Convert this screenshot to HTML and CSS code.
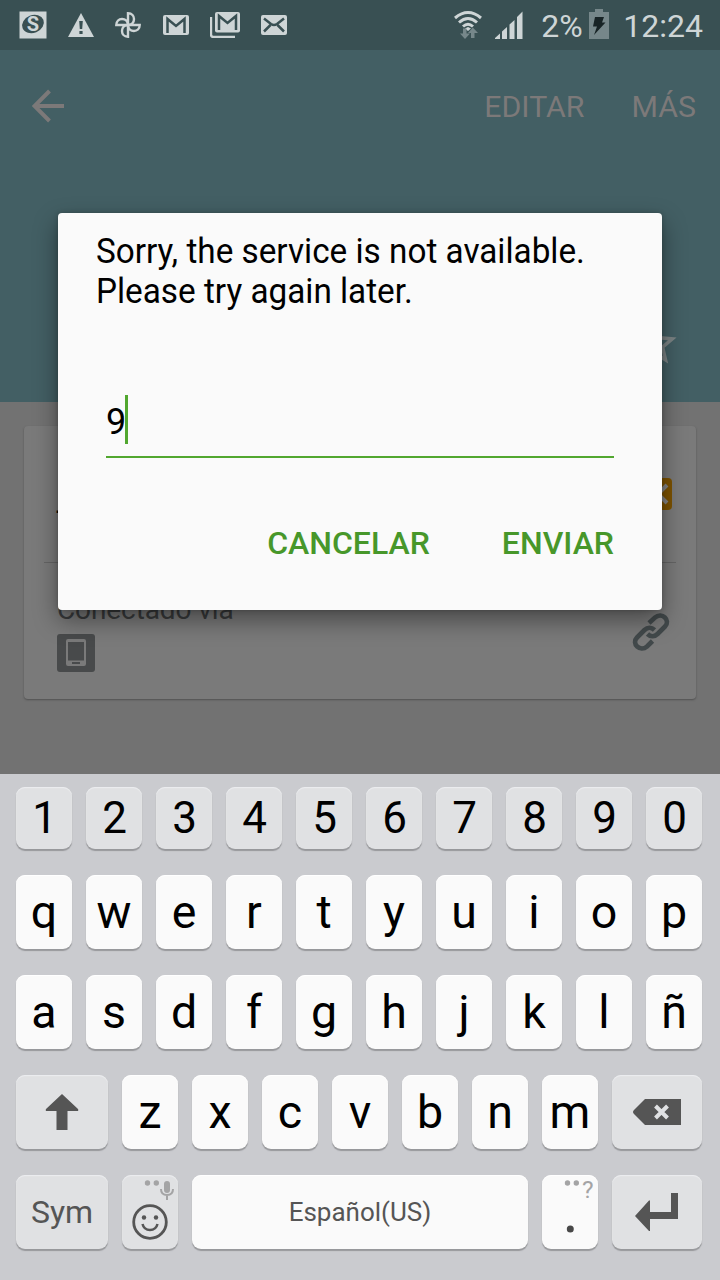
FILE: index.html
```html
<!DOCTYPE html>
<html lang="es">
<head>
<meta charset="utf-8">
<title>Contacto</title>
<link rel="stylesheet" href="styles.css">
</head>
<body>
<div class="screen">
  <header class="status">
    <div class="notifications">
      <svg width="28" height="28" viewBox="0 0 28 28"><path class="lit" d="M0.500.500h27v27h-27z"/><ellipse class="hole" cx="14" cy="13" rx="11.200" ry="8.800" transform="rotate(-22 14 13)"/><text class="badge-letter" x="14" y="20" text-anchor="middle">S</text></svg>
      <svg width="26" height="24" viewBox="0 0 26 24"><path class="lit" d="M13 0 26 24H0z"/><path class="hole" d="M11.200 8h3.600l-.6 8h-2.400zM11.400 18h3.200v3h-3.200z"/></svg>
      <svg width="26" height="26" viewBox="0 0 26 26"><g class="outline"><path d="M13 13V1.300c4 0 6 2.700 6 5.700s-2 6-6 6z"/><path d="M13 13h11.700c0 4-2.700 6-5.700 6s-6-2-6-6z"/><path d="M13 13v11.700c-4 0-6-2.700-6-5.700s2-6 6-6z"/><path d="M13 13H1.300c0-4 2.700-6 5.700-6s6 2 6 6z"/></g></svg>
      <svg width="26" height="20" viewBox="0 0 26 20"><rect class="lit" width="26" height="20" rx="2"/><path class="cut" d="M4.500 18V4L13 11l8.500-7v14"/></svg>
      <svg width="30" height="26" viewBox="0 0 30 26"><path class="outline" d="M1 5v17.500q0 2.500 2.500 2.500H25"/><rect class="lit" x="5" width="25" height="20.500" rx="2"/><path class="cut" d="M9 18V4l8.500 7L26 4v14"/></svg>
      <svg width="26" height="20" viewBox="0 0 26 20"><rect class="lit" width="26" height="20" rx="2"/><path class="cut" d="m3 3.500 7 5.500q3 2 6 0l7-5.500M3 16.500 9.500 10M23 16.500 16.500 10"/></svg>
    </div>
    <div class="system">
      <svg class="wifi" width="28" height="30" viewBox="0 0 28 30"><g class="waves"><path d="M1 8q13-11 26 0"/><path d="M5 12.500q9-8 18 0"/><path d="M9 16.500q5-4.500 10 0"/></g><path class="lit" d="m11 18.500 3-1.500 3 1.500-3 2.500z"/><path class="dim" d="M9 18.500h3.500v5H16L11 29l-5-5.500h3zM17 28h3.500v-5H24l-5.200-5.500L14 23h3z"/></svg>
      <svg class="signal" width="28" height="28" viewBox="0 0 28 28"><path class="lit" d="M0 28v-1l5-4.500V28zM7 28v-7.500l5-4.500v12zM14.500 28V13.500l5-4.500v19zM22 28V6l5.500-5.500V28z"/></svg>
      <span class="percent">2%</span>
      <svg class="battery" width="20" height="30" viewBox="0 0 20 30"><path class="dim" d="M0 3h6V0h8v3h6v27H0z"/><path class="bolt" d="M6 8h9l-2 5.500h3.500L5 26l3-8.500H4z"/></svg>
      <span class="clock">12:24</span>
    </div>
  </header>

  <section class="hero">
    <nav class="toolbar">
      <svg width="34" height="34" viewBox="0 0 34 34"><path class="back" d="M32 17H2.500M17.500 2 2.500 17l15 15"/></svg>
      <div class="actions"><span>EDITAR</span><span>MÁS</span></div>
    </nav>
    <svg class="star" width="53" height="53" viewBox="0 0 24 24"><path d="m22 9.240-7.190-.62L12 2 9.190 8.630 2 9.240l5.460 4.730L5.820 21 12 17.270 18.180 21l-1.630-7.030zM12 15.400l-3.760 2.270 1-4.280-3.320-2.880 4.380-.38L12 6.100l1.710 4.040 4.380.38-3.320 2.880 1 4.280z"/></svg>
  </section>

  <main class="content">
    <article class="card">
      <div class="phone-row">
        <span class="number">-</span>
        <svg width="32" height="32" viewBox="0 0 32 32"><rect class="orange" width="32" height="32" rx="4"/><path class="cross" d="m5 7 7 9-7 9M27 7 18 16l9 9"/></svg>
      </div>
      <div class="linked-row">
        <div class="linked">
          <span class="linked-label">Conectado vía</span>
          <svg width="38" height="38" viewBox="0 0 38 38"><rect class="tile" width="38" height="38" rx="3"/><path class="device" fill-rule="evenodd" d="M11 5h16q2 0 2 2v23q0 2-2 2H11q-2 0-2-2V7q0-2 2-2zm0 3v18.500h16V8zm4 20v2h8v-2z"/></svg>
        </div>
        <svg class="chain" width="38" height="38" viewBox="0 0 38 38"><path d="m17 10 6-5.500c7-6 16 3 10 9L25.500 21c-3 3-7 3-10 0"/><path d="m20.500 28-5.500 5.500c-7 6-16-3-10-9L12.500 17c3-3 7-3 10-0"/></svg>
      </div>
    </article>
  </main>

  <section class="keyboard">
    <div class="row digits"><kbd>1</kbd><kbd>2</kbd><kbd>3</kbd><kbd>4</kbd><kbd>5</kbd><kbd>6</kbd><kbd>7</kbd><kbd>8</kbd><kbd>9</kbd><kbd>0</kbd></div>
    <div class="row"><kbd>q</kbd><kbd>w</kbd><kbd>e</kbd><kbd>r</kbd><kbd>t</kbd><kbd>y</kbd><kbd>u</kbd><kbd>i</kbd><kbd>o</kbd><kbd>p</kbd></div>
    <div class="row"><kbd>a</kbd><kbd>s</kbd><kbd>d</kbd><kbd>f</kbd><kbd>g</kbd><kbd>h</kbd><kbd>j</kbd><kbd>k</kbd><kbd>l</kbd><kbd>ñ</kbd></div>
    <div class="row edge">
      <kbd class="fn"><svg class="shift" width="34" height="36" viewBox="0 0 34 36"><path class="ink" d="M17 0 33 15q1 2-1 2H22.500v19h-11V17H2q-2 0-1-2z"/></svg></kbd>
      <kbd>z</kbd><kbd>x</kbd><kbd>c</kbd><kbd>v</kbd><kbd>b</kbd><kbd>n</kbd><kbd>m</kbd>
      <kbd class="fn"><svg width="48" height="26" viewBox="0 0 48 26"><path class="ink" d="M12 0h36v26H12L1 15q-2-2 0-4z"/><path class="erase" d="m22.500 7 12 12m0-12-12 12"/></svg></kbd>
    </div>
    <div class="row bottom">
      <kbd class="fn sym">Sym</kbd>
      <kbd class="fn emoji"><svg width="56" height="74" viewBox="0 0 56 74"><g class="hint"><circle cx="25.500" cy="8" r="2.700"/><circle cx="34.300" cy="8" r="2.700"/><rect x="42" y="6" width="6" height="12" rx="3"/><path class="mic" d="M39 14q0 6 6 6t6-6M45 20v5"/></g><circle class="face" cx="28" cy="47" r="16.300"/><path class="face smile" d="M20.500 49q1.500 6 7.500 6t7.500-6"/><circle class="ink" cx="22" cy="42.500" r="2.200"/><circle class="ink" cx="34" cy="42.500" r="2.200"/></svg></kbd>
      <kbd class="space">Español(US)</kbd>
      <kbd class="period"><svg width="56" height="74" viewBox="0 0 56 74"><g class="hint"><circle cx="25.500" cy="8" r="2.700"/><circle cx="34.300" cy="8" r="2.700"/><text x="40" y="23">?</text></g><circle class="dot" cx="28.300" cy="54" r="3.500"/></svg></kbd>
      <kbd class="fn"><svg class="enter" width="44" height="40" viewBox="0 0 44 40"><path class="ink" d="M36 1H43v26H15v12h-1L0 24 14 8.500h1V20h21z"/></svg></kbd>
    </div>
  </section>

  <div class="dialog" role="dialog">
    <p class="message">Sorry, the service is not available.<br>Please try again later.</p>
    <div class="field"><span>9</span><i class="caret"></i></div>
    <div class="buttons"><span>CANCELAR</span><span>ENVIAR</span></div>
  </div>
</div>
</body>
</html>
```
FILE: styles.css
```css
* { box-sizing: border-box; }
body { margin: 0; font-family: Roboto, "Liberation Sans", sans-serif; }
svg { display: block; flex: none; }
.screen { position: relative; width: 720px; height: 1280px; display: flex; flex-direction: column; overflow: hidden; background: #727272; }

.status { height: 50px; background: #395053; display: flex; justify-content: space-between; color: #ced5d6; }
.notifications { display: flex; align-items: center; padding-left: 19px; gap: 21.200px; }
.lit { fill: #ced5d6; }
.hole { fill: #395053; }
.dim { fill: #76878a; }
.bolt { fill: #182426; }
.badge-letter { fill: #ced5d6; font-size: 20px; font-weight: 700; }
.outline { fill: none; stroke: #ced5d6; stroke-width: 2.4px; }
.cut { fill: none; stroke: #395053; stroke-width: 2.5px; }
.system { display: flex; align-items: center; padding-right: 17px; font-size: 32px; line-height: 50px; }
.waves { fill: none; stroke: #ced5d6; stroke-width: 3px; }
.wifi { margin-right: 13px; }
.signal { margin-right: 18px; }
.percent { width: 48px; padding-top: 1px; }
.battery { margin: 0 14px 2px 0; }
.clock { padding-top: 1px; }

.hero { height: 352px; background: #435f64; }
.toolbar { height: 112px; padding: 0 24px 0 32px; display: flex; align-items: center; justify-content: space-between; color: #7c7979; font-size: 30.300px; }
.back { fill: none; stroke: #7c7979; stroke-width: 4px; }
.actions { display: flex; gap: 47px; }
.star { margin: 155px 39px 0 auto; }
.star path { fill: #7c8485; }

.content { height: 372px; padding: 24px; background: #727272; }
.card { height: 273px; padding: 0 20px; background: #7a7a7a; border-radius: 4px; box-shadow: 0 1px 2px #505050; }
.phone-row { height: 137px; padding: 0 4px 0 12px; border-bottom: 1px solid #656565; display: flex; justify-content: space-between; align-items: center; font-size: 34px; color: #000; }
.number { padding-top: 32px; }
.orange { fill: #7d5300; }
.cross { fill: none; stroke: #858585; stroke-width: 4px; }
.linked-row { padding: 29px 6px 0 13px; display: flex; justify-content: space-between; }
.linked { display: flex; flex-direction: column; gap: 7px; }
.linked-label { font-size: 28px; line-height: 35px; letter-spacing: -.1px; color: #393b3c; }
.tile { fill: #484a4b; }
.device { fill: #7a7a7a; }
.chain { margin-top: 21px; }
.chain path { fill: none; stroke: #42494b; stroke-width: 4.6px; }

.keyboard { height: 506px; padding: 13px 18px 0 16px; background: #cacbcf; display: flex; flex-direction: column; gap: 26px; }
.row { height: 74px; display: grid; grid-template-columns: repeat(10, 56px); gap: 14px; }
.digits { height: 62px; }
.edge { grid-template-columns: 92px repeat(7, 56px) 90px; }
.bottom { grid-template-columns: 92px 56px 336px 56px 90px; }
kbd { display: flex; align-items: center; justify-content: center; border-radius: 9px; background: #fafafa; box-shadow: 0 2px 1px #97989b, inset 0 1px 1px #fff; font-family: inherit; font-size: 46.500px; line-height: 54px; color: #000; }
.digits kbd, .fn { background: #e0e1e3; box-shadow: 0 2px 1px #97989b, inset 0 1px 1px #edeef0; }
.digits kbd { font-size: 44px; padding-left: 1px; }
.sym { font-size: 32px; color: #555; }
.space { font-size: 26px; color: #555; }
.shift { margin-right: 1px; }
.enter { margin-right: 1px; }
.ink { fill: #555; }
.erase { stroke: #e0e1e3; stroke-width: 4px; }
.hint { fill: #a4a4a5; font-size: 24.500px; }
.mic { fill: none; stroke: #a4a4a5; stroke-width: 2px; }
.face { fill: none; stroke: #555; stroke-width: 2.8px; }
.smile { stroke-width: 2.5px; }
.dot { fill: #484848; }

.dialog { position: absolute; left: 58px; top: 213px; width: 604px; height: 397px; padding: 19px 48px 0; background: #fafafa; border-radius: 4px; box-shadow: 0 10px 24px rgba(0, 0, 0, .42), 0 0 5px rgba(0, 0, 0, .2); }
.message { margin: 0 -10px; font-size: 35px; line-height: 40px; color: #000; white-space: nowrap; transform: scaleX(.951); transform-origin: left; }
.field { height: 63px; margin-top: 83px; border-bottom: 2px solid #51a72f; display: flex; align-items: flex-start; font-size: 36px; line-height: 55px; }
.caret { width: 3px; height: 49px; background: #51a72f; margin-left: -1px; }
.buttons { margin-top: 65px; display: flex; justify-content: flex-end; gap: 72px; font-size: 32px; line-height: 40px; font-weight: 500; color: #47972a; }
```
